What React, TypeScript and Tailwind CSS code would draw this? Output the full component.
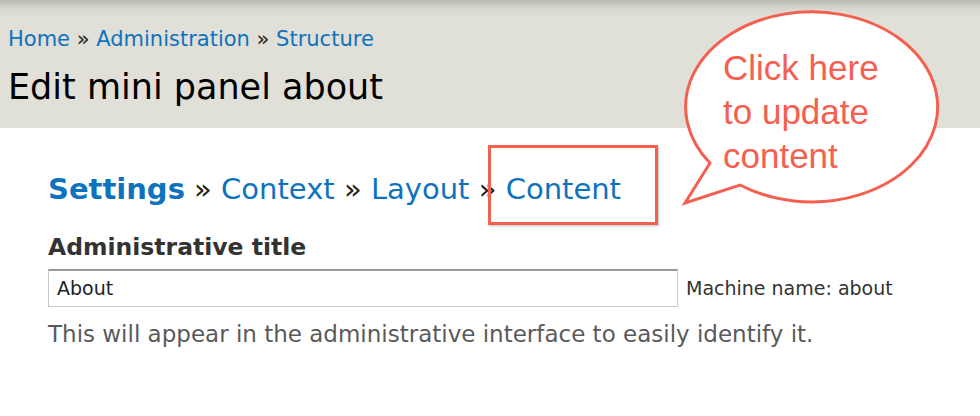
export default function App() {
  return (
    <div className="relative w-[980px] h-[416px] overflow-hidden bg-white font-['DejaVu_Sans',sans-serif]">
      {/* header */}
      <div className="h-[128px] bg-[#e0dfd8] bg-[linear-gradient(to_bottom,#b9b8b2_0px,#d6d5ce_8px,#e0dfd8_18px)] px-2 pt-[24px]">
        <div className="text-[21px] leading-[30px] text-[#222]">
          <a href="#" className="text-[#0e73be]">Home</a> » <a href="#" className="text-[#0e73be]">Administration</a> »{' '}
          <a href="#" className="text-[#0e73be]">Structure</a>
        </div>
        <h1 className="mt-[13px] text-[35px] leading-[40px] text-black font-normal">Edit mini panel about</h1>
      </div>

      {/* content */}
      <div className="px-12 pt-[37px]">
        <div className="text-[29px] leading-[48px] text-[#222]">
          <a href="#" className="font-bold text-[#0e73be]">Settings</a> » <a href="#" className="text-[#0e73be]">Context</a> »{' '}
          <a href="#" className="text-[#0e73be]">Layout</a> » <a href="#" className="text-[#0e73be]">Content</a>
        </div>
        <div className="mt-[20px] text-[23.5px] leading-[28px] font-bold text-[#333]">Administrative title</div>
        <div className="mt-[8px] flex items-center gap-2">
          <div className="w-[630px] h-[38px] border border-[#c8c8c8] border-t-[#999] border-t-2 px-2 flex items-center text-[19px] text-[#222]">
            About
          </div>
          <span className="text-[19px] text-[#333]">Machine name: about</span>
        </div>
        <p className="mt-[13px] text-[23px] leading-[28px] text-[#5a5a5a]">
          This will appear in the administrative interface to easily identify it.
        </p>
      </div>

      {/* annotation box */}
      <div className="absolute left-[488px] top-[145px] w-[170px] h-[80px] border-[3px] border-[#f4604f] shadow-[1px_1px_2px_rgba(0,0,0,0.25)]" />

      {/* speech bubble */}
      <svg className="absolute left-0 top-0" width="980" height="416" viewBox="0 0 980 416">
        <path
          d="M 740 185 A 126 95 0 1 0 710 163 L 685 203 Z"
          fill="#fff"
          stroke="#f4604f"
          strokeWidth="3"
          strokeLinejoin="miter"
        />
      </svg>
      <div className="absolute left-[723px] top-[46px] font-['Liberation_Sans',Arial,sans-serif] text-[35px] leading-[44px] text-[#f4604f]">
        Click here
        <br />
        to update
        <br />
        content
      </div>
    </div>
  );
}
